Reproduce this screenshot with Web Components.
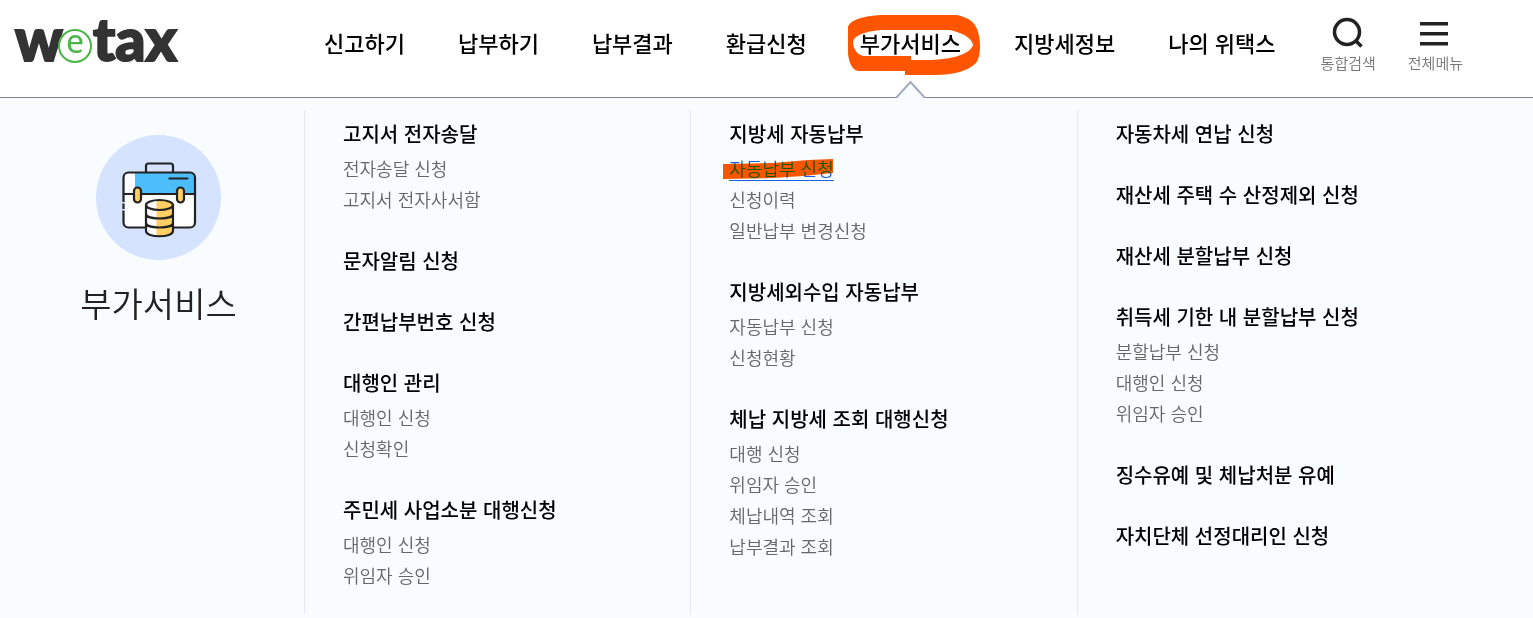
<!DOCTYPE html>
<html lang="ko">
<head>
<meta charset="utf-8">
<title>wetax</title>
<style>
  body {
    margin: 0;
    background: #fff;
    color: #000;
    font-family: "Noto Sans CJK KR", "Noto Sans", sans-serif;
  }
</style>
</head>
<body>
<wetax-header>
  <wetax-logo slot="logo"></wetax-logo>
  <gnb-item>신고하기</gnb-item>
  <gnb-item>납부하기</gnb-item>
  <gnb-item>납부결과</gnb-item>
  <gnb-item>환급신청</gnb-item>
  <gnb-item active>부가서비스</gnb-item>
  <gnb-item>지방세정보</gnb-item>
  <gnb-item>나의 위택스</gnb-item>
  <util-button slot="util">
    <svg slot="icon" width="32" height="32" viewBox="0 0 32 32" fill="none" stroke="#222" stroke-width="3.500"><circle cx="15" cy="16" r="12.500"/><path d="M24 25l5.500 5.500"/></svg>
    통합검색
  </util-button>
  <util-button slot="util">
    <svg slot="icon" width="32" height="32" viewBox="0 0 32 32" fill="#222"><path d="M1 6h28v3.500H1zM1 16h28v3.500H1zM1 26h28v3.500H1z"/></svg>
    전체메뉴
  </util-button>
</wetax-header>

<mega-menu>
  <menu-intro slot="intro">부가서비스</menu-intro>

  <menu-column>
    <menu-group label="고지서 전자송달">
      <menu-link>전자송달 신청</menu-link>
      <menu-link>고지서 전자사서함</menu-link>
    </menu-group>
    <menu-group label="문자알림 신청"></menu-group>
    <menu-group label="간편납부번호 신청"></menu-group>
    <menu-group label="대행인 관리">
      <menu-link>대행인 신청</menu-link>
      <menu-link>신청확인</menu-link>
    </menu-group>
    <menu-group label="주민세 사업소분 대행신청">
      <menu-link>대행인 신청</menu-link>
      <menu-link>위임자 승인</menu-link>
    </menu-group>
  </menu-column>

  <menu-column>
    <menu-group label="지방세 자동납부">
      <menu-link active>자동납부 신청</menu-link>
      <menu-link>신청이력</menu-link>
      <menu-link>일반납부 변경신청</menu-link>
    </menu-group>
    <menu-group label="지방세외수입 자동납부">
      <menu-link>자동납부 신청</menu-link>
      <menu-link>신청현황</menu-link>
    </menu-group>
    <menu-group label="체납 지방세 조회 대행신청">
      <menu-link>대행 신청</menu-link>
      <menu-link>위임자 승인</menu-link>
      <menu-link>체납내역 조회</menu-link>
      <menu-link>납부결과 조회</menu-link>
    </menu-group>
  </menu-column>

  <menu-column>
    <menu-group label="자동차세 연납 신청"></menu-group>
    <menu-group label="재산세 주택 수 산정제외 신청"></menu-group>
    <menu-group label="재산세 분할납부 신청"></menu-group>
    <menu-group label="취득세 기한 내 분할납부 신청">
      <menu-link>분할납부 신청</menu-link>
      <menu-link>대행인 신청</menu-link>
      <menu-link>위임자 승인</menu-link>
    </menu-group>
    <menu-group label="징수유예 및 체납처분 유예"></menu-group>
    <menu-group label="자치단체 선정대리인 신청"></menu-group>
  </menu-column>
</mega-menu>

<script>
class WetaxHeader extends HTMLElement {
  constructor() {
    super();
    this.attachShadow({ mode: "open" }).innerHTML = `
      <style>
        :host { display: block; }
        header {
          display: flex;
          align-items: flex-start;
          justify-content: space-between;
          height: 97px;
          padding: 0 70px 0 14px;
          border-bottom: 1px solid #7d839d;
        }
        .right { display: flex; }
        nav { display: flex; gap: 53px; }
        .util { display: flex; gap: 32px; margin-left: 45px; padding-top: 16px; }
      </style>
      <header>
        <slot name="logo"></slot>
        <div class="right">
          <nav><slot></slot></nav>
          <div class="util"><slot name="util"></slot></div>
        </div>
      </header>
    `;
  }
}
customElements.define("wetax-header", WetaxHeader);

class WetaxLogo extends HTMLElement {
  constructor() {
    super();
    this.attachShadow({ mode: "open" }).innerHTML = `
      <style>
        :host { display: block; }
        a { display: block; text-decoration: none; }
        svg { display: block; }
        text { font-family: Lato, "Noto Sans", sans-serif; }
        .dark { fill: #333; stroke: #333; stroke-width: 2; font-size: 59px; font-weight: 900; }
        .e { fill: #4ab648; font-family: "Noto Sans", sans-serif; font-size: 32px; }
      </style>
      <a href="#" aria-label="wetax">
        <svg width="190" height="90" viewBox="0 0 190 90">
          <text class="dark" x="1" y="61">w</text>
          <text class="dark" x="79" y="61">tax</text>
          <circle cx="61" cy="46" r="16" fill="#fff" stroke="#4ab648" stroke-width="2"/>
          <text class="e" x="61" y="53" text-anchor="middle">e</text>
        </svg>
      </a>
    `;
  }
}
customElements.define("wetax-logo", WetaxLogo);

class GnbItem extends HTMLElement {
  constructor() {
    super();
    this.attachShadow({ mode: "open" }).innerHTML = `
      <style>
        :host { display: block; position: relative; }
        a {
          display: block;
          padding-top: 26px;
          color: #000;
          font-size: 22px;
          font-weight: 500;
          line-height: 32px;
          text-decoration: none;
          white-space: nowrap;
        }
        .mark, .arrow { display: none; position: absolute; pointer-events: none; }
        :host([active]) .mark, :host([active]) .arrow { display: block; }
        .mark { left: -13px; top: 14px; }
        .arrow { left: 35px; top: 80px; }
      </style>
      <a href="#"><slot></slot></a>
      <svg class="mark" width="134" height="62" viewBox="0 0 134 62">
        <path fill="#ff5500" fill-rule="evenodd" d="M1 13C3 6 16 2 34 1H110C123 4 130 9 132 22C134 32 133 44 129 49C121 57 107 61 88 61H58V57H11C5 56 2 48 1 40ZM6 28C7 21 20 17 35 16H103C116 19 125 24 126 31C124 38 111 45 84 46H64V42H18C11 42 6 35 6 28Z"/>
      </svg>
      <svg class="arrow" width="31" height="18" viewBox="0 0 31 18">
        <path fill="#f8fcff" stroke="#a3aac0" stroke-width="2" d="M1 18L15.500 2L30 18"/>
      </svg>
    `;
  }
}
customElements.define("gnb-item", GnbItem);

class UtilButton extends HTMLElement {
  constructor() {
    super();
    this.attachShadow({ mode: "open" }).innerHTML = `
      <style>
        :host { display: block; }
        button {
          display: flex;
          flex-direction: column;
          align-items: center;
          gap: 4px;
          padding: 0;
          border: 0;
          background: none;
          color: #777;
          font: inherit;
          font-size: 15px;
          font-weight: 350;
          line-height: 22px;
          white-space: nowrap;
          cursor: pointer;
        }
      </style>
      <button type="button"><slot name="icon"></slot><span><slot></slot></span></button>
    `;
  }
}
customElements.define("util-button", UtilButton);

class MegaMenu extends HTMLElement {
  constructor() {
    super();
    this.attachShadow({ mode: "open" }).innerHTML = `
      <style>
        :host {
          display: grid;
          grid-template-columns: 304px repeat(3, 1fr);
          padding: 12px 70px 4px 0;
          background: #f8fcff;
        }
      </style>
      <slot name="intro"></slot>
      <slot></slot>
    `;
  }
}
customElements.define("mega-menu", MegaMenu);

class MenuIntro extends HTMLElement {
  constructor() {
    super();
    this.attachShadow({ mode: "open" }).innerHTML = `
      <style>
        :host {
          display: flex;
          flex-direction: column;
          align-items: center;
          gap: 18px;
          padding: 25px 0 0 13px;
        }
        h2 {
          margin: 0;
          color: #222;
          font-size: 34px;
          font-weight: 350;
          line-height: 50px;
        }
      </style>
      <svg width="125" height="125" viewBox="0 0 125 125" fill="none" stroke="#222" stroke-width="2.200" stroke-linejoin="round" stroke-linecap="round">
        <circle cx="62.500" cy="62.500" r="62.500" fill="#d5e3ff" stroke="none"/>
        <path d="M50 37V31q0-2.500 2.500-2.500h22q2.500 0 2.500 2.500v6"/>
        <rect x="27.500" y="37.500" width="71.500" height="55" rx="5" fill="#fff" stroke="none"/>
        <path d="M39 38h55q5 0 5 5v16H39z" fill="#4bbdf8" stroke="none"/>
        <rect x="27.500" y="37.500" width="71.500" height="55" rx="5"/>
        <path d="M28 59h71M73.500 43.500h18"/>
        <path d="M27.500 67v1.500M27.500 74v1.500" stroke="#d5e3ff" stroke-width="3" stroke-linecap="butt"/>
        <rect x="38" y="52.500" width="7" height="15" rx="3.500" fill="#ffcf63"/>
        <rect x="81" y="52.500" width="7" height="15" rx="3.500" fill="#ffcf63"/>
        <path d="M50 70v26c0 7 27 7 27 0V70c0-7-27-7-27 0z" fill="#fff" stroke="none"/>
        <path d="M60.500 65c8-1 16.500 1 16.500 5v26c0 4-8 6-16.500 5z" fill="#ffcf63" stroke="none"/>
        <ellipse cx="63.500" cy="70" rx="13.500" ry="5"/>
        <path d="M50 70v26c0 7 27 7 27 0V70M50 79c0 6 27 6 27 0M50 88c0 6 27 6 27 0"/>
      </svg>
      <h2><slot></slot></h2>
    `;
  }
}
customElements.define("menu-intro", MenuIntro);

class MenuColumn extends HTMLElement {
  constructor() {
    super();
    this.attachShadow({ mode: "open" }).innerHTML = `
      <style>
        :host {
          display: flex;
          flex-direction: column;
          gap: 30px;
          padding: 8px 0 23px 38px;
          border-left: 1px solid #e3e8f5;
        }
      </style>
      <slot></slot>
    `;
  }
}
customElements.define("menu-column", MenuColumn);

class MenuGroup extends HTMLElement {
  constructor() {
    super();
    this.attachShadow({ mode: "open" }).innerHTML = `
      <style>
        :host { display: block; }
        h3 { margin: 0; font-size: 20px; font-weight: 500; line-height: 31px; }
        a { color: #000; text-decoration: none; }
        .links { display: flex; flex-direction: column; align-items: flex-start; }
        .links.filled { margin-top: 4px; }
      </style>
      <h3><a href="#"></a></h3>
      <div class="links"><slot></slot></div>
    `;
  }
  connectedCallback() {
    this.shadowRoot.querySelector("a").textContent = this.getAttribute("label");
    const slot = this.shadowRoot.querySelector("slot");
    // only groups with sub links get the extra space under the heading
    slot.parentNode.classList.toggle("filled", slot.assignedElements().length > 0);
  }
}
customElements.define("menu-group", MenuGroup);

class MenuLink extends HTMLElement {
  constructor() {
    super();
    this.attachShadow({ mode: "open" }).innerHTML = `
      <style>
        :host { display: block; position: relative; }
        a {
          display: block;
          color: #666;
          font-size: 18px;
          font-weight: 350;
          line-height: 31px;
          text-decoration: none;
        }
        svg { display: none; position: absolute; left: -6px; top: 6px; pointer-events: none; mix-blend-mode: darken; }
        :host([active]) a { color: #1a62dd; box-shadow: inset 0 -3px #f8fcff, inset 0 -4px #1a62dd; }
        :host([active]) svg { display: block; }
      </style>
      <a href="#"><slot></slot></a>
      <svg width="111" height="22" viewBox="0 0 111 22"><path fill="#ff5500" d="M0 5L50 4L85 1L110 0V14L80 17L50 19L0 20Z"/></svg>
    `;
  }
}
customElements.define("menu-link", MenuLink);
</script>
</body>
</html>
